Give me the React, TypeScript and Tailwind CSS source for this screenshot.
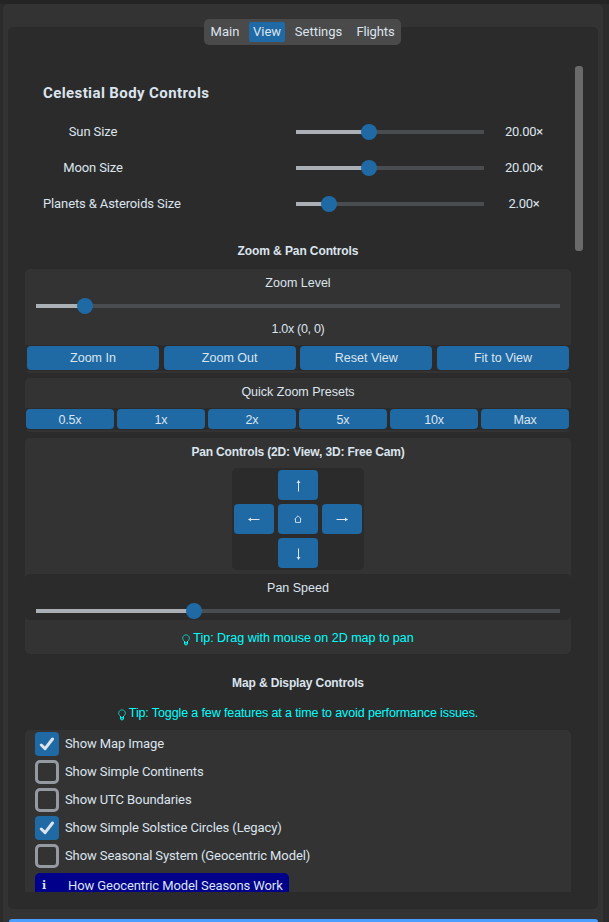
import type { ReactNode } from "react";

const arial = "font-['Liberation_Sans',Arial,sans-serif]";

function Slider({ width, value }: { width: number; value: number }) {
  return (
    <div className="relative h-4 shrink-0" style={{ width }}>
      <div className="absolute inset-x-0 top-1.5 h-1 bg-[#4a4d50]" />
      <div className="absolute left-0 top-1.5 h-1 bg-[#aab0b5]" style={{ width: value }} />
      <div className="absolute top-0 size-4 rounded-full bg-[#1f6aa5]" style={{ left: value - 8 }} />
    </div>
  );
}

function Label({ children, className = "" }: { children: ReactNode; className?: string }) {
  return <div className={`whitespace-nowrap text-center leading-4 ${className}`}>{children}</div>;
}

function SizeRow({ label, value, pos }: { label: string; value: string; pos: number }) {
  return (
    <div className="flex h-9 items-center pl-[18px]">
      <div className="flex w-[138px]">
        <div className="min-w-[100px] whitespace-nowrap text-center tracking-[-0.12px]">{label}</div>
      </div>
      <div className="ml-[115px]">
        <Slider width={188} value={pos} />
      </div>
      <div className="ml-[15px] w-[50px] text-center tracking-[-0.25px]">{value}</div>
    </div>
  );
}

function Btn({ children, className }: { children: ReactNode; className: string }) {
  return (
    <button className={`flex items-center justify-center rounded-[4px] bg-[#1f6aa5] leading-4 ${className}`}>
      {children}
    </button>
  );
}

function Arrow({ turn }: { turn: string }) {
  return (
    <svg width="12" height="12" viewBox="0 0 12 12" className={turn} fill="none" stroke="#dce4ee" strokeWidth="1">
      <path d="M0.5 6.5H11.5" />
      <path d="M3 4.5V8.5L0.3 6.5Z" fill="#dce4ee" stroke="none" />
    </svg>
  );
}

function Bulb() {
  return (
    <svg width="8" height="12" viewBox="0 0 8 12" className="mr-[3px] mt-[3px] shrink-0" fill="none" stroke="#10cfc4">
      <path d="M2.5 7.4C1.2 6.4 0.7 5.4 0.7 4.1C0.7 2.1 2.1 0.9 4 0.9S7.3 2.1 7.3 4.1C7.3 5.4 6.8 6.4 5.5 7.4" strokeWidth="0.9" />
      <path d="M2.5 7V10.2H5.5V7M2.5 8.6H5.5M4 10V11.5" strokeWidth="1" stroke="#00f5ee" />
    </svg>
  );
}

function Check({ label, on = false }: { label: string; on?: boolean }) {
  return (
    <div className="flex h-7 items-center">
      {on ? (
        <div className="flex size-6 items-center justify-center rounded-[4px] bg-[#1f6aa5]">
          <svg width="16" height="14" viewBox="0 0 16 14" fill="none" stroke="#dce4ee" strokeWidth="3" strokeLinecap="round" strokeLinejoin="round">
            <path d="M2.3 8L6.1 11.6L13.5 2" />
          </svg>
        </div>
      ) : (
        <div className="size-6 rounded-[5px] border-[3px] border-[#949a9f]" />
      )}
      <span className="ml-1.5 whitespace-nowrap tracking-[-0.1px]">{label}</span>
    </div>
  );
}

const zooms = ["Zoom In", "Zoom Out", "Reset View", "Fit to View"];
const presets = ["0.5x", "1x", "2x", "5x", "10x", "Max"];

export default function App() {
  return (
    <div className="h-[922px] w-[609px] overflow-hidden bg-[#2b2b2b] font-[Roboto,sans-serif] text-[13px] leading-4 text-[#dce4ee]">
      <div className="h-1 bg-[#242424]" />
      <div className="ml-[3px] h-[918px] w-[600px] rounded-t-[5px] bg-[#333333] pl-[5px] pt-[15px]">
        <div className="relative z-10 -mb-[18px] ml-[196px] flex h-[26px] w-[197px] items-center rounded-[5px] bg-[#4a4a4a]">
          <div className="w-[42px] text-center">Main</div>
          <div className="ml-[3px] h-5 w-9 rounded-[2px] bg-[#1f6aa5] text-center leading-5">View</div>
          <div className="w-[67px] text-center">Settings</div>
          <div className="w-[47px] text-center tracking-[-0.1px]">Flights</div>
        </div>
        <div className="flex h-[882px] w-[590px] rounded-[5px] bg-[#2b2b2b] pl-[17px]">
          <div className="h-[865px] w-[546px] overflow-hidden">
            <h1 className="pl-[18px] pt-[56px] text-[15px] font-bold leading-5 tracking-[0.39px]">Celestial Body Controls</h1>
            <div className="mt-[11px]">
              <SizeRow label="Sun Size" value="20.00×" pos={73} />
              <SizeRow label="Moon Size" value="20.00×" pos={73} />
              <SizeRow label="Planets & Asteroids Size" value="2.00×" pos={33} />
            </div>

            <div className={`${arial} text-[12.5px]`}>
              <Label className="mt-[21px] text-[12px] font-bold tracking-[-0.1px]">Zoom &amp; Pan Controls</Label>
              <div className="mt-[10px] h-[104px] rounded-[5px] bg-[#333333] pt-[6px]">
                <Label>Zoom Level</Label>
                <div className="ml-[11px] mt-[7px]">
                  <Slider width={524} value={49} />
                </div>
                <Label className="mt-[7px] tracking-[-0.3px]">1.0x (0, 0)</Label>
                <div className="mt-2 flex h-[26px] justify-between bg-[#2b2b2b] px-0.5 pt-px">
                  {zooms.map((z) => (
                    <Btn key={z} className="h-6 w-[132px]">{z}</Btn>
                  ))}
                </div>
              </div>

              <div className="mt-[5px] h-[54px] rounded-[5px] bg-[#333333] pt-[6px]">
                <Label>Quick Zoom Presets</Label>
                <div className="mt-2 flex h-[22px] gap-[3px] bg-[#2b2b2b] pl-px pt-px">
                  {presets.map((p) => (
                    <Btn key={p} className="h-5 w-[88px] pt-0.5 tracking-[-0.2px]">{p}</Btn>
                  ))}
                </div>
              </div>

              <div className="mt-[6px] h-[216px] rounded-[5px] bg-[#333333] pt-[6px]">
                <Label className="text-[12px] font-bold tracking-[-0.17px]">Pan Controls (2D: View, 3D: Free Cam)</Label>
                <div className="mx-auto mt-2 grid h-[102px] w-[132px] grid-cols-3 gap-1 rounded-[5px] bg-[#2b2b2b] p-0.5">
                  <Btn className="col-start-2 h-[30px] w-10 pt-0.5"><Arrow turn="rotate-90 -scale-y-100" /></Btn>
                  <Btn className="col-start-1 h-[30px] w-10"><Arrow turn="rotate-0" /></Btn>
                  <Btn className="h-[30px] w-10">
                    <svg width="8" height="8" viewBox="0 0 8 8" fill="none" stroke="#dce4ee" strokeWidth="0.9">
                      <path d="M0.6 4.2L4 0.8L7.4 4.2M1.5 3.5V7.4H6.5V3.5" />
                    </svg>
                  </Btn>
                  <Btn className="h-[30px] w-10"><Arrow turn="-scale-x-100" /></Btn>
                  <Btn className="col-start-2 h-[30px] w-10 pt-0.5"><Arrow turn="-rotate-90" /></Btn>
                </div>
                <div className="mt-1 h-[46px] rounded-[5px] bg-[#2b2b2b] pt-[6px]">
                  <Label>Pan Speed</Label>
                  <div className="ml-[11px] mt-[7px]">
                    <Slider width={524} value={158} />
                  </div>
                </div>
                <Label className="mt-[10px] flex items-center justify-center text-[#00ffff]">
                  <Bulb />Tip: Drag with mouse on 2D map to pan
                </Label>
              </div>

              <Label className="mt-[21px] text-[12px] font-bold tracking-[-0.13px]">Map &amp; Display Controls</Label>
              <Label className="mt-[14px] flex items-center justify-center tracking-[-0.12px] text-[#00ffff]">
                <Bulb />Tip: Toggle a few features at a time to avoid performance issues.
              </Label>
            </div>

            <div className="mt-[9px] h-[200px] rounded-t-[5px] bg-[#333333] pl-[10px]">
              <Check label="Show Map Image" on />
              <Check label="Show Simple Continents" />
              <Check label="Show UTC Boundaries" />
              <Check label="Show Simple Solstice Circles (Legacy)" on />
              <Check label="Show Seasonal System (Geocentric Model)" />
              <div className="mt-[3px] flex h-7 w-[254px] items-center rounded-[5px] bg-[#00008b] pb-[3px]">
                <span className="ml-[7px] w-[26px] font-['DejaVu_Serif',serif] text-[11px] font-bold">i</span>
                <span className="whitespace-nowrap tracking-[-0.09px]">How Geocentric Model Seasons Work</span>
              </div>
            </div>
          </div>
          <div className="ml-1 mt-[39px] h-[185px] w-2 rounded-[3px] bg-[#6a6a6a]" />
        </div>
        <div className="ml-px mt-[10px] h-[10px] w-[589px] rounded-t-[3px] bg-[#4a9eff]" />
      </div>
    </div>
  );
}
